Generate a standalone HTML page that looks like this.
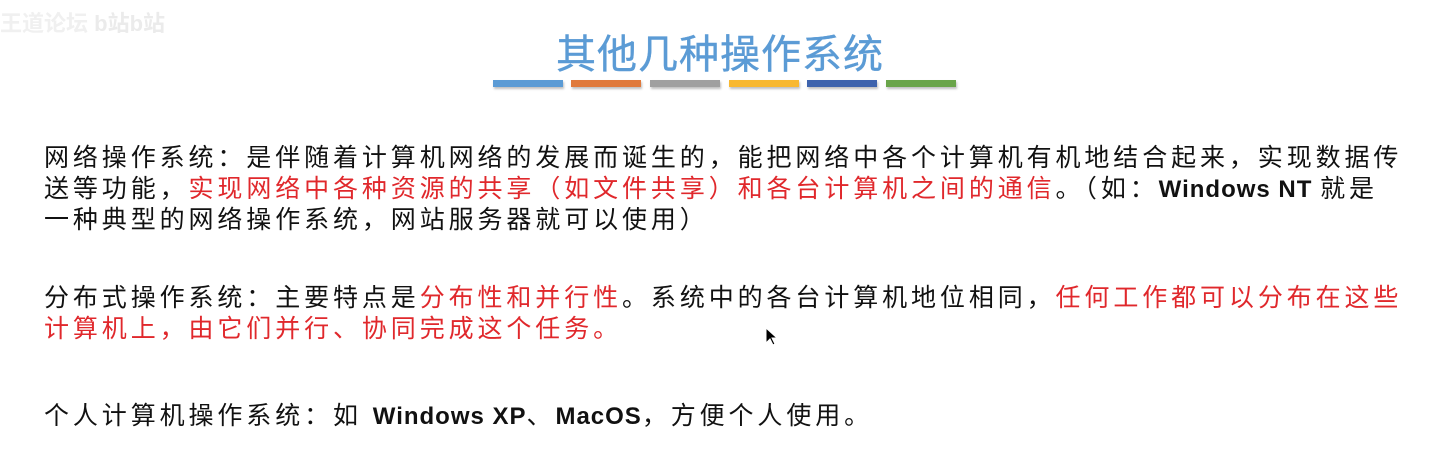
<!DOCTYPE html><html><head><meta charset="utf-8"><style>
body{margin:0;width:1440px;height:451px;background:#fff;overflow:hidden;position:relative;font-family:"Liberation Sans","Noto Sans CJK SC",sans-serif}
.t{position:absolute;left:0;width:1440px;top:22px;text-align:center;font-size:40px;color:#5b9bd5;letter-spacing:1px;-webkit-text-stroke:0.4px #5b9bd5}
.b{position:absolute;top:80px;height:7px;width:70px;box-shadow:1px 2px 2px rgba(0,0,0,.25)}
.p{position:absolute;left:44px;width:1400px;font-size:25px;letter-spacing:3.9px;line-height:31px;color:#111;white-space:nowrap}
.r{color:#e0282c}
.l{letter-spacing:1px;font-weight:bold;font-size:24px}
.wm{position:absolute;left:0;top:6px;font-size:22px;color:#f0f0f0;font-weight:bold}
</style></head><body>
<div class="wm">王道论坛 <span style="color:#ebebeb">b站b站</span></div>
<div class="t">其他几种操作系统</div>
<div class="b" style="left:493px;background:#5b9bd5"></div>
<div class="b" style="left:571px;background:#e07a3c"></div>
<div class="b" style="left:650px;background:#a0a0a0"></div>
<div class="b" style="left:729px;background:#f8b830"></div>
<div class="b" style="left:807px;background:#3e63ad"></div>
<div class="b" style="left:886px;background:#6aa54a"></div>
<div class="p" style="top:143px">网络操作系统：是伴随着计算机网络的发展而诞生的，能把网络中各个计算机有机地结合起来，实现数据传<br>送等功能，<span class="r">实现网络中各种资源的共享（如文件共享）和各台计算机之间的通信</span>。（如：<span class="l">Windows NT </span>就是<br>一种典型的网络操作系统，网站服务器就可以使用）</div>
<div class="p" style="top:283px">分布式操作系统：主要特点是<span class="r">分布性和并行性</span>。系统中的各台计算机地位相同，<span class="r">任何工作都可以分布在这些<br>计算机上，由它们并行、协同完成这个任务。</span></div>
<div class="p" style="top:401px">个人计算机操作系统：如 <span class="l">Windows XP</span>、<span class="l">MacOS</span>，方便个人使用。</div>
<svg style="position:absolute;left:765px;top:327px" width="14" height="20"><path d="M1 1 L1 16 L5 12 L8 18 L10 17 L7 11 L12 11 Z" fill="#000" stroke="#fff" stroke-width="1"/></svg>
</body></html>
